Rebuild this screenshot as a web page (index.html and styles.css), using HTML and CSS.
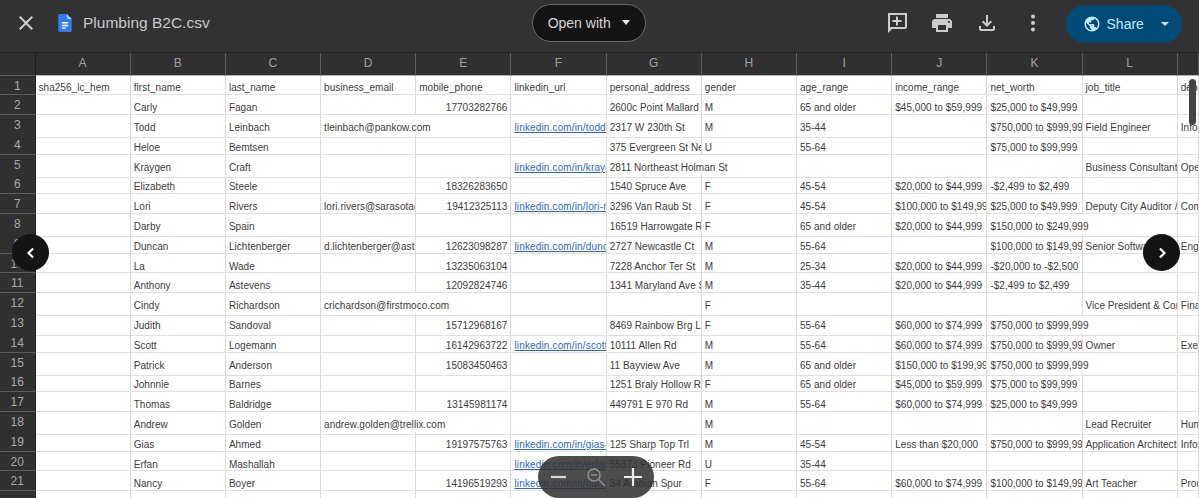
FILE: index.html
```html
<!DOCTYPE html>
<html lang="en">
<head>
  <meta charset="UTF-8">
  <title>Plumbing B2C.csv</title>
  <link rel="stylesheet" href="styles.css">
</head>
<body>
  <!-- Drive preview toolbar -->
  <header class="toolbar">
    <button class="icon-btn close-btn">
      <svg viewBox="0 0 24 24" width="24" height="24"><path d="M19 6.41L17.59 5 12 10.59 6.41 5 5 6.41 10.59 12 5 17.59 6.41 19 12 13.41 17.59 19 19 17.59 13.41 12z"/></svg>
    </button>
    <svg class="doc-icon" viewBox="0 0 15 20" width="14" height="18"><path fill="#2f7cf6" d="M2 0h7.5L15 5.500V18a2 2 0 0 1-2 2H2a2 2 0 0 1-2-2V2a2 2 0 0 1 2-2z"/><path fill="#a9c8fb" d="M9.500 0L15 5.500h-4a1.500 1.500 0 0 1-1.500-1.500z"/><path fill="#fff" d="M4 9h7v1.500H4zM4 12h7v1.500H4zM4 15h4.500v1.500H4z"/></svg>
    <span class="file-name">Plumbing B2C.csv</span>
    <button class="open-with">Open with <i class="caret"></i></button>
    <div class="actions">
      <button class="icon-btn">
        <svg viewBox="0 0 24 24" width="26" height="26"><path d="M20 2H3v20l4-4h13c1.100 0 2-.9 2-2V2zm0 14H5.170L5 17.170V4h15v12z"/><path d="M11 5.500h2V9h3.500v2H13v3.500h-2V11H7.500V9H11z"/></svg>
      </button>
      <button class="icon-btn">
        <svg viewBox="0 0 24 24" width="24" height="24"><path d="M19 8H5c-1.660 0-3 1.340-3 3v6h4v4h12v-4h4v-6c0-1.660-1.340-3-3-3zm-3 11H8v-5h8v5zm3-7c-.55 0-1-.45-1-1s.45-1 1-1 1 .45 1 1-.45 1-1 1zm-1-9H6v4h12V3z"/></svg>
      </button>
      <button class="icon-btn">
        <svg viewBox="0 0 24 24" width="24" height="24"><path d="M18 15v3H6v-3H4v3c0 1.100.9 2 2 2h12c1.100 0 2-.9 2-2v-3h-2zm-1-4l-1.410-1.410L13 12.170V4h-2v8.170L8.410 9.590 7 11l5 5 5-5z"/></svg>
      </button>
      <button class="icon-btn">
        <svg viewBox="0 0 24 24" width="24" height="24"><circle cx="12" cy="5.500" r="2"/><circle cx="12" cy="12" r="2"/><circle cx="12" cy="18.500" r="2"/></svg>
      </button>
    </div>
    <div class="share">
      <span class="share-main">
        <svg viewBox="0 0 24 24" width="18" height="18"><path d="M12 2C6.480 2 2 6.480 2 12s4.480 10 10 10 10-4.480 10-10S17.520 2 12 2zm-1 17.930c-3.950-.49-7-3.850-7-7.930 0-.62.08-1.210.21-1.790L9 15v1c0 1.100.9 2 2 2v1.930zm6.900-2.540c-.26-.81-1-1.390-1.900-1.390h-1v-3c0-.55-.45-1-1-1H8v-2h2c.55 0 1-.45 1-1V7h2c1.100 0 2-.9 2-2v-.41c2.930 1.190 5 4.060 5 7.410 0 2.080-.8 3.970-2.100 5.390z"/></svg>
        Share
      </span>
      <span class="share-more"><i class="caret"></i></span>
    </div>
  </header>

  <!-- Spreadsheet preview -->
  <main class="sheet">
    <div class="row head"><span class="rowno"></span><span>A</span><span>B</span><span>C</span><span>D</span><span>E</span><span>F</span><span>G</span><span>H</span><span>I</span><span>J</span><span>K</span><span>L</span><span></span></div>
    <div class="row first"><span class="rowno">1</span><span>sha256_lc_hem</span><span>first_name</span><span>last_name</span><span>business_email</span><span>mobile_phone</span><span>linkedin_url</span><span>personal_address</span><span>gender</span><span>age_range</span><span>income_range</span><span>net_worth</span><span>job_title</span><span>department</span></div>
    <div class="row"><span class="rowno">2</span><span></span><span>Carly</span><span>Fagan</span><span></span><span class="num">17703282766</span><span></span><span>2600c Point Mallard Ct</span><span>M</span><span>65 and older</span><span>$45,000 to $59,999</span><span>$25,000 to $49,999</span><span></span><span></span></div>
    <div class="row"><span class="rowno">3</span><span></span><span>Todd</span><span>Leinbach</span><span class="over">tleinbach@pankow.com</span><span></span><span><a href="#">linkedin.com/in/todd-leinbach</a></span><span>2317 W 230th St</span><span>M</span><span>35-44</span><span></span><span>$750,000 to $999,999</span><span>Field Engineer</span><span>Information</span></div>
    <div class="row"><span class="rowno">4</span><span></span><span>Heloe</span><span>Bemtsen</span><span></span><span></span><span></span><span>375 Evergreen St Ne</span><span>U</span><span>55-64</span><span></span><span>$75,000 to $99,999</span><span></span><span></span></div>
    <div class="row"><span class="rowno">5</span><span></span><span>Kraygen</span><span>Craft</span><span></span><span></span><span><a href="#">linkedin.com/in/kraygen-craft</a></span><span class="over">2811 Northeast Holman St</span><span></span><span></span><span></span><span></span><span>Business Consultant</span><span>Operations</span></div>
    <div class="row"><span class="rowno">6</span><span></span><span>Elizabeth</span><span>Steele</span><span></span><span class="num">18326283650</span><span></span><span>1540 Spruce Ave</span><span>F</span><span>45-54</span><span>$20,000 to $44,999</span><span>-$2,499 to $2,499</span><span></span><span></span></div>
    <div class="row"><span class="rowno">7</span><span></span><span>Lori</span><span>Rivers</span><span>lori.rivers@sarasotagov.com</span><span class="num">19412325113</span><span><a href="#">linkedin.com/in/lori-rivers</a></span><span>3296 Van Raub St</span><span>F</span><span>45-54</span><span>$100,000 to $149,999</span><span>$25,000 to $49,999</span><span>Deputy City Auditor / Manager</span><span>Compliance</span></div>
    <div class="row"><span class="rowno">8</span><span></span><span>Darby</span><span>Spain</span><span></span><span></span><span></span><span>16519 Harrowgate Rd</span><span>F</span><span>65 and older</span><span>$20,000 to $44,999</span><span class="over">$150,000 to $249,999</span><span></span><span></span></div>
    <div class="row"><span class="rowno">9</span><span></span><span>Duncan</span><span>Lichtenberger</span><span>d.lichtenberger@astra.com</span><span class="num">12623098287</span><span><a href="#">linkedin.com/in/duncan-l</a></span><span>2727 Newcastle Ct</span><span>M</span><span>55-64</span><span></span><span>$100,000 to $149,999</span><span>Senior Software Engineer</span><span>Engineering</span></div>
    <div class="row"><span class="rowno">10</span><span></span><span>La</span><span>Wade</span><span></span><span class="num">13235063104</span><span></span><span>7228 Anchor Ter St</span><span>M</span><span>25-34</span><span>$20,000 to $44,999</span><span>-$20,000 to -$2,500</span><span></span><span></span></div>
    <div class="row"><span class="rowno">11</span><span></span><span>Anthony</span><span>Astevens</span><span></span><span class="num">12092824746</span><span></span><span>1341 Maryland Ave S</span><span>M</span><span>35-44</span><span>$20,000 to $44,999</span><span>-$2,499 to $2,499</span><span></span><span></span></div>
    <div class="row"><span class="rowno">12</span><span></span><span>Cindy</span><span>Richardson</span><span class="over">crichardson@firstmoco.com</span><span></span><span></span><span></span><span>F</span><span></span><span></span><span></span><span>Vice President &amp; Controller</span><span>Finance</span></div>
    <div class="row"><span class="rowno">13</span><span></span><span>Judith</span><span>Sandoval</span><span></span><span class="num">15712968167</span><span></span><span>8469 Rainbow Brg Ln</span><span>F</span><span>55-64</span><span>$60,000 to $74,999</span><span class="over">$750,000 to $999,999</span><span></span><span></span></div>
    <div class="row"><span class="rowno">14</span><span></span><span>Scott</span><span>Logemann</span><span></span><span class="num">16142963722</span><span><a href="#">linkedin.com/in/scott-l</a></span><span>10111 Allen Rd</span><span>M</span><span>55-64</span><span>$60,000 to $74,999</span><span>$750,000 to $999,999</span><span>Owner</span><span>Executive</span></div>
    <div class="row"><span class="rowno">15</span><span></span><span>Patrick</span><span>Anderson</span><span></span><span class="num">15083450463</span><span></span><span>11 Bayview Ave</span><span>M</span><span>65 and older</span><span>$150,000 to $199,999</span><span class="over">$750,000 to $999,999</span><span></span><span></span></div>
    <div class="row"><span class="rowno">16</span><span></span><span>Johnnie</span><span>Barnes</span><span></span><span></span><span></span><span>1251 Braly Hollow Rd</span><span>F</span><span>65 and older</span><span>$45,000 to $59,999</span><span>$75,000 to $99,999</span><span></span><span></span></div>
    <div class="row"><span class="rowno">17</span><span></span><span>Thomas</span><span>Baldridge</span><span></span><span class="num">13145981174</span><span></span><span>449791 E 970 Rd</span><span>M</span><span>55-64</span><span>$60,000 to $74,999</span><span>$25,000 to $49,999</span><span></span><span></span></div>
    <div class="row"><span class="rowno">18</span><span></span><span>Andrew</span><span>Golden</span><span class="over">andrew.golden@trellix.com</span><span></span><span></span><span></span><span>M</span><span></span><span></span><span></span><span>Lead Recruiter</span><span>Human Resources</span></div>
    <div class="row"><span class="rowno">19</span><span></span><span>Gias</span><span>Ahmed</span><span></span><span class="num">19197575763</span><span><a href="#">linkedin.com/in/gias-ahmed</a></span><span>125 Sharp Top Trl</span><span>M</span><span>45-54</span><span>Less than $20,000</span><span>$750,000 to $999,999</span><span>Application Architect</span><span>Information</span></div>
    <div class="row"><span class="rowno">20</span><span></span><span>Erfan</span><span>Mashallah</span><span></span><span></span><span><a href="#">linkedin.com/in/erfan-m</a></span><span>55373 Pioneer Rd</span><span>U</span><span>35-44</span><span></span><span></span><span></span><span></span></div>
    <div class="row"><span class="rowno">21</span><span></span><span>Nancy</span><span>Boyer</span><span></span><span class="num">14196519293</span><span><a href="#">linkedin.com/in/nancy-b</a></span><span>34 Arabian Spur</span><span>F</span><span>55-64</span><span>$60,000 to $74,999</span><span>$100,000 to $149,999</span><span>Art Teacher</span><span>Production</span></div>
    <div class="row"><span class="rowno"></span><span></span><span></span><span></span><span></span><span></span><span></span><span></span><span></span><span></span><span></span><span></span><span></span><span></span></div>
  </main>

  <!-- Floating controls over the sheet -->
  <div class="scroll-thumb"></div>
  <button class="page-btn prev">
    <svg viewBox="0 0 24 24" width="20" height="20"><path d="M14.500 6.500L9 12l5.500 5.500" fill="none" stroke="#fff" stroke-width="2.600"/></svg>
  </button>
  <button class="page-btn next">
    <svg viewBox="0 0 24 24" width="20" height="20"><path d="M9.500 6.500L15 12l-5.500 5.500" fill="none" stroke="#fff" stroke-width="2.600"/></svg>
  </button>
  <div class="zoom-pill">
    <svg viewBox="0 0 24 24" width="24" height="24"><path d="M4 12h15" stroke="#d8d8d8" stroke-width="2.200"/></svg>
    <svg viewBox="0 0 24 24" width="24" height="24" fill="none" stroke="#8f8f8f" stroke-width="1.600"><circle cx="10" cy="10" r="6"/><path d="M7 10h6M14.500 14.500L21 21"/></svg>
    <svg viewBox="0 0 24 24" width="24" height="24"><path d="M3 12h18M12 3v18" stroke="#ececec" stroke-width="2.200"/></svg>
  </div>
</body>
</html>
```

FILE: styles.css
```css
html, body {
  height: 100%;
}

body {
  margin: 0;
  overflow: hidden;
  background-color: #ffffff;
  font-family: 'Liberation Sans', Arial, sans-serif;
}

button {
  padding: 0;
  border: none;
  background: none;
  font-family: inherit;
}

/* Top bar */
.toolbar {
  display: flex;
  align-items: center;
  height: 53px;
  padding-bottom: 7px;
  box-sizing: border-box;
  background-color: #323232;
  border-bottom: 1px solid #222222;
}

.icon-btn {
  display: flex;
  width: 24px;
  height: 24px;
  justify-content: center;
  align-items: center;
}

.icon-btn svg {
  fill: #cccccc;
}

.close-btn {
  margin-left: 14px;
}

.doc-icon {
  margin-left: 20px;
}

.file-name {
  margin-left: 11px;
  font-size: 15.500px;
  color: #c9c9c9;
}

.open-with {
  display: flex;
  align-items: center;
  gap: 11px;
  width: 114px;
  height: 38px;
  margin-left: 322px;
  padding-left: 15px;
  box-sizing: border-box;
  background-color: #141414;
  border: 1px solid #6a6a6a;
  border-radius: 19px;
  font-size: 14px;
  color: #d6d6d6;
}

.caret {
  display: block;
  width: 0;
  height: 0;
  border-left: 4.500px solid transparent;
  border-right: 4.500px solid transparent;
  border-top: 5px solid #eeeeee;
}

.actions {
  display: flex;
  gap: 21.300px;
  margin-left: 239px;
}

.share {
  display: flex;
  height: 38px;
  width: 116px;
  margin-left: 21px;
  margin-top: 3px;
  background-color: #004a77;
  border-radius: 19px;
  color: #c2e7ff;
  font-size: 14px;
}

.share-main {
  display: flex;
  flex: 1;
  align-items: center;
  gap: 6px;
  padding-left: 17px;
  border-right: 1px solid #0a4368;
}

.share-main svg {
  fill: #c2e7ff;
}

.share-more {
  display: flex;
  width: 33px;
  justify-content: center;
  align-items: center;
}

.share-more .caret {
  border-left-width: 4px;
  border-right-width: 4px;
  border-top: 4px solid #c2e7ff;
}

/* Spreadsheet */
.row {
  display: grid;
  grid-template-columns: 35.500px repeat(12, 95.200px) minmax(0, 1fr);
  height: 19.800px;
  font-size: 10px;
  letter-spacing: 0.040px;
  color: #3c3c3c;
}

.row span {
  min-width: 0;
  padding: 4px 3px 0;
  box-sizing: border-box;
  overflow: hidden;
  white-space: nowrap;
  line-height: 18px;
  border-right: 1px solid #dadada;
  border-bottom: 1px solid #e0e0e0;
}

.first span {
  padding-top: 3px;
}

.row .num {
  text-align: right;
}

.row .over {
  overflow: visible;
  border-right-color: transparent;
}

.row a {
  color: #2f66c4;
  letter-spacing: 0.150px;
}

.row .rowno {
  padding: 0;
  text-align: center;
  font-size: 12px;
  line-height: 20px;
  color: #a8a8a8;
  background-color: #303030;
  border-right: 1px solid #1f1f1f;
  border-bottom: 1px solid #5c5c5c;
}

.head {
  height: 22.500px;
  background-color: #303030;
}

.head span {
  padding: 0;
  text-align: center;
  font-size: 12px;
  line-height: 21px;
  color: #a0a0a0;
  border-right: 1px solid #5c5c5c;
  border-bottom: 1px solid #b5b5b5;
}

/* Floating controls */
.scroll-thumb {
  position: absolute;
  top: 79px;
  left: 1189px;
  width: 7px;
  height: 46px;
  border-radius: 4px;
  background-color: #444444;
}

.page-btn {
  position: absolute;
  top: 234px;
  display: flex;
  width: 37px;
  height: 37px;
  justify-content: center;
  align-items: center;
  border-radius: 50%;
  background-color: #141414;
}

.prev {
  left: 12px;
}

.next {
  left: 1143px;
}

.zoom-pill {
  position: absolute;
  top: 456px;
  left: 538px;
  display: flex;
  width: 116px;
  height: 42px;
  justify-content: center;
  align-items: center;
  gap: 13px;
  border-radius: 21px;
  background-color: rgba(48, 48, 48, 0.86);
}
```
